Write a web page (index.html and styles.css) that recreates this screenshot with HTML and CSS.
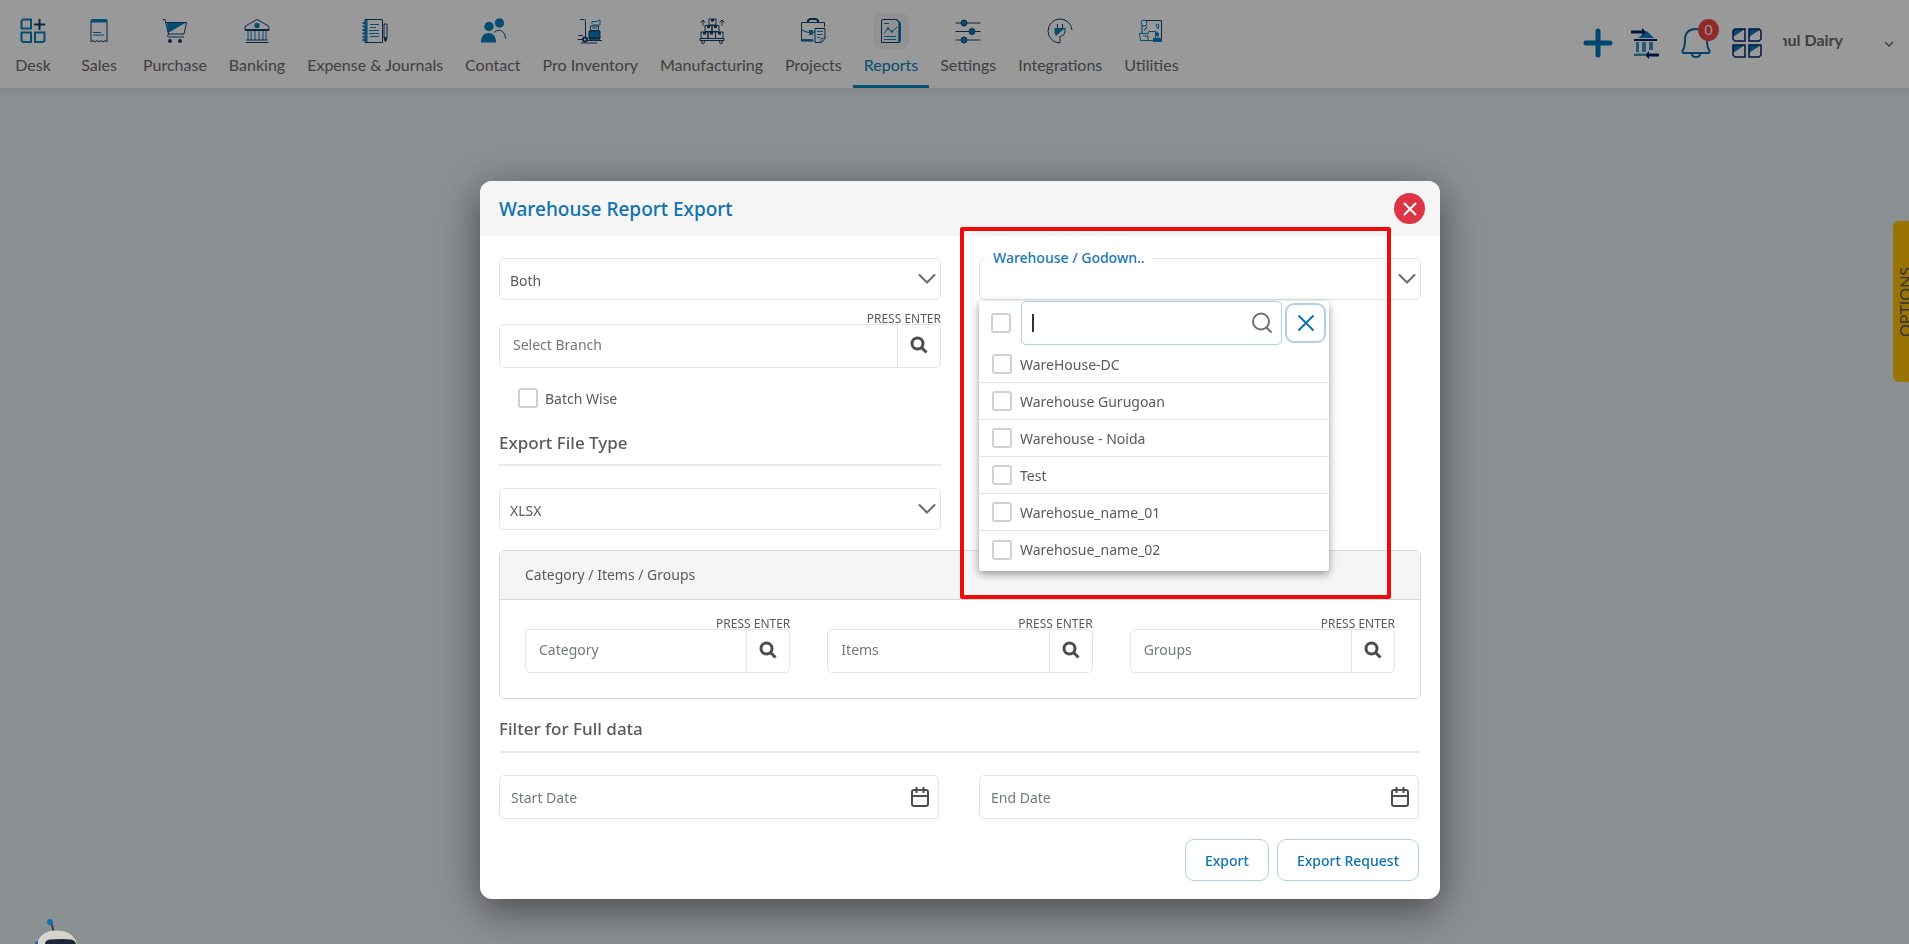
FILE: index.html
```html
<!DOCTYPE html>
<html lang="en">
<head>
    <meta charset="UTF-8">
    <meta name="viewport" content="width=device-width, initial-scale=1.0">
    <title>Warehouse Report Export</title>
    <link rel="stylesheet" href="styles.css">
</head>
<body>
    <header class="topbar">
        <nav class="menu">
            <a class="menu-item" href="#">
                <svg class="menu-icon" viewBox="0 0 26 26"><g class="line-thick"><path d="M3 1.500h8v9H1.500V3z"/><path d="M1.500 14.500h9.500v9.500H3L1.500 22.500z"/><path d="M15 14.500h9.500v8L23 24h-8z"/></g><path class="dark-thick" d="M19.500 1v11M14 6.500h11"/></svg>
                <span>Desk</span>
            </a>
            <a class="menu-item" href="#">
                <svg class="menu-icon" viewBox="0 0 26 26"><path class="dark" d="M5 4v20l2-1.500 2 1.500 2-1.500 2 1.500 2-1.500 2 1.500 2-1.500 2 1.500V4"/><path class="fill" d="M4.500 4.500V2.500Q4.500 1 6 1h14q1.500 0 1.500 1.500v2z"/><path class="line" d="M7 14.500h8M7 17h11"/></svg>
                <span>Sales</span>
            </a>
            <a class="menu-item" href="#">
                <svg class="menu-icon" viewBox="0 0 26 26"><path class="fill" d="M5 4.500h19L6 15z"/><path class="dark" d="M.5 1.500h2.500L6.500 16H22L24.500 4.500H4M6.500 16q-2 3 0 3H22"/><circle class="fill-dark" cx="8" cy="23" r="2"/><circle class="fill-dark" cx="18" cy="23" r="2"/></svg>
                <span>Purchase</span>
            </a>
            <a class="menu-item" href="#">
                <svg class="menu-icon" viewBox="0 0 26 26"><path class="dark" d="M1 10.500 1.500 8 13 1.500 24.500 8l.5 2.500v2H1z"/><circle class="fill" cx="13" cy="7.500" r="2.700"/><path class="line" d="M4 13v9M7 13v9M11 13v9M15 13v9M19 13v9M22 13v9"/><path class="dark" d="M1 11.500h24M2.500 22h21M1.500 24.500h23"/></svg>
                <span>Banking</span>
            </a>
            <a class="menu-item" href="#">
                <svg class="menu-icon" viewBox="0 0 26 26"><path class="dark" d="M3 1.500h17.500v23H3z"/><path class="line-thick" d="M4.500 2v22M.5 5h4M.5 8.500h4M.5 12h4M.5 15.500h4M.5 19h4M.5 22h4"/><path class="line" d="M8 6.500h9M8 9.500h6M7 12.500h10M7 15.500h10M8 18.500h9"/><path class="dark" d="M22 6h3v14l-1.500 4-1.500-4z"/><path class="fill-dark" d="M22 19h3l-1.500 5z"/></svg>
                <span>Expense &amp; Journals</span>
            </a>
            <a class="menu-item" href="#">
                <svg class="menu-icon" viewBox="0 0 26 26"><circle class="fill" cx="9" cy="8.500" r="4.700"/><circle class="fill" cx="19.500" cy="5" r="4.700"/><path class="fill" d="M1 24.500C1 18 4 15 8.500 15s7.500 3 7.500 9.500z"/><path class="dark" d="M14 14.500q4-4 8.500-1 3 2 3 7"/></svg>
                <span>Contact</span>
            </a>
            <a class="menu-item" href="#">
                <svg class="menu-icon" viewBox="0 0 26 26"><path class="dark" d="M3 1.500h4.500q1 0 1 1V19M.5 21.500H6M1.500 17.500H6M10 22.500h15M4 25h16"/><circle class="dark-thick" cx="8" cy="21.500" r="2"/><path class="fill" d="M12 13h11v8H12z"/><path class="dark" d="M12 13h11v8H12zM13.500 8h8v4.500h-8z"/><path class="dark-thick" d="M12 20.500h11"/><path class="line" d="M15 6.500V3.500h5l3-1.500v5h-7M15 10h5"/></svg>
                <span>Pro Inventory</span>
            </a>
            <a class="menu-item" href="#">
                <svg class="menu-icon" viewBox="0 0 26 26"><path class="dark" d="M10 1h7v6h-7zM6 7.500h7v6H6zM13 7.500h7v6h-7zM2 14h7v6.500H2zM9 14h7.500v6.500H9zM16.500 14H24v6.500h-7.500zM1 20.500h24v2H1zM4 7.500v-5M1.500 4.500 4 2l2 2.500M23 7.500v-5M20.500 4.500 23 2l2.500 2.500"/><path class="fill-dark" d="M12 1h3v2.500h-3zM8 7.500h3V10H8zM15 7.500h3V10h-3zM4 14h3v2.500H4zM11 14h3v2.500h-3zM19 14h3v2.500h-3z"/><circle class="dark" cx="4" cy="24" r="1.500"/><circle class="dark" cx="22" cy="24" r="1.500"/></svg>
                <span>Manufacturing</span>
            </a>
            <a class="menu-item" href="#">
                <svg class="menu-icon" viewBox="0 0 26 26"><path class="dark-thick" d="M8 4V2.500L10 1h6l2 1.500V4"/><path class="dark" d="M24.500 9V4.500H1.500v18.500h12M2 12q4 2.500 8 2.500M13 14.500l2-1"/><path class="line-thick" d="M2 22h11"/><path class="fill" d="M9 12h4v5H9z"/><path class="dark" d="M15 10.500h10v10L21.500 24.500H15z"/><path class="line" d="M17 13.500h6M17 16.500h6M17 19.500h3M25 20l-4 .5v4"/></svg>
                <span>Projects</span>
            </a>
            <a class="menu-item active" href="#">
                <svg class="menu-icon" viewBox="0 0 26 26"><path class="fill" d="M3.500 4.500V3q0-2 2-2H19l4 4v18l-2 2h-1V4.500z"/><path class="paper" d="M3.500 24.500V3q0-1.500 1.500-1.500h12.500q3.500.5 3.500 4v19z"/><path class="line" d="M6 15.500l4-5 4 3.500 5-5M6 5.500h5M6 18.500h12M6 21.500h12"/><circle class="fill" cx="10" cy="10.500" r="1.200"/><circle class="fill" cx="14" cy="13.500" r="1.200"/></svg>
                <span>Reports</span>
            </a>
            <a class="menu-item" href="#">
                <svg class="menu-icon" viewBox="0 0 26 26"><path class="dark" d="M.5 5h25M.5 13.500h25M.5 22h25"/><circle class="fill ring" cx="9" cy="5" r="3"/><circle class="fill ring" cx="17" cy="13.500" r="3"/><circle class="fill ring" cx="9" cy="22" r="3"/></svg>
                <span>Settings</span>
            </a>
            <a class="menu-item" href="#">
                <svg class="menu-icon" viewBox="0 0 26 26"><path class="dark" d="M25 12A12 12 0 1 0 13 25v-7"/><path class="fill" d="M7.500 10H18L9 18 7.500 15z"/><path class="dark" d="M10.500 10V6M15.500 10V6M18 10v4q0 3-4.500 4.500"/></svg>
                <span>Integrations</span>
            </a>
            <a class="menu-item" href="#">
                <svg class="menu-icon" viewBox="0 0 26 26"><circle class="line" cx="6" cy="5" r="3"/><path class="dark" d="M8 2.500h15.500v21H18M4 8v7M9 8.500l-2.500 4"/><path class="line" d="M18 7q2-2 3 0l-1 4zM1.500 15.500h9V13.500h7v9h-15zM5 18h5v4M17 13l3 2v5"/><path class="fill" d="M15 20h9v4h-9zM17 15h4l-1 3h-3z"/></svg>
                <span>Utilities</span>
            </a>
        </nav>
        <div class="tools">
            <button class="tool add" type="button" aria-label="Add"><svg viewBox="0 0 30 30"><path d="M15 3v24M3 15h24" fill="none" stroke="#0077b9" stroke-width="5" stroke-linecap="round"/></svg></button>
            <button class="tool" type="button" aria-label="Bank transfer"><svg viewBox="0 0 30 30"><path fill="#0b81c4" d="M8 10 17 3l7 7z"/><path fill="#3f93c4" d="M6 14h3v10H6zM12 14h4v10h-4zM19 14h4v8h-4zM4 25.500h11V28H4z"/><path fill="none" stroke="#04246a" stroke-width="2" d="M4 12h23"/><path fill="#04246a" d="M1 2.500h11V0l4 4-4 4V5.500H1zM29 25.500H19V23l-4 4 4 4v-2.500h10z"/></svg></button>
            <button class="tool" type="button" aria-label="Notifications"><svg viewBox="0 0 30 30"><path d="M3 25c-2 0-2-2-1-3 2-3 2-6 2-10C4 5 8 1 15 1s11 4 11 11c0 4 0 7 2 10 1 1 1 3-1 3zM11 26q0 3 4 3t4-3" fill="none" stroke="#0a6da8" stroke-width="2"/></svg><span class="badge">0</span></button>
            <button class="tool" type="button" aria-label="Apps"><svg viewBox="0 0 30 30"><path fill="#0a78b8" d="M1 1h12L1 9zM17 1h12L17 9zM1 17h12L1 25zM17 17h12l-12 8z"/><g fill="none" stroke="#04246a" stroke-width="1.500"><path d="M3 1h10v12H3l-2-2V3zM17 1h10l2 2v8l-2 2H17zM1 17h12v12H3l-2-2zM17 17h12v10l-2 2H17z"/></g></svg></button>
            <span class="company"><span>hul Dairy</span></span>
            <button class="company-toggle" type="button" aria-label="Switch company"><svg viewBox="0 0 10 10"><path d="M1 3l4 4 4-4" fill="none" stroke="#666" stroke-width="1.500"/></svg></button>
        </div>
    </header>

    <button class="options-tab" type="button">OPTIONS</button>

    <div class="backdrop">
        <form class="modal" role="dialog" aria-labelledby="modal-title">
            <div class="modal-header">
                <h1 id="modal-title">Warehouse Report Export</h1>
                <button class="close" type="button" aria-label="Close"><svg viewBox="0 0 16 16"><path d="M2 2l12 12M14 2 2 14"/></svg></button>
            </div>
            <div class="modal-body">
                <div class="columns">
                    <div class="column">
                        <div class="select-box">
                            <select aria-label="Type"><option>Both</option></select>
                            <svg class="chevron" viewBox="0 0 18 12"><path d="M1.500 2 9 9.500 16.500 2"/></svg>
                        </div>
                        <div class="lookup">
                            <label class="hint" for="branch">PRESS ENTER</label>
                            <div class="lookup-box">
                                <input id="branch" type="text" placeholder="Select Branch">
                                <button type="button" aria-label="Search branch"><svg viewBox="0 0 18 18"><circle cx="7.500" cy="7.500" r="5.500"/><path d="M11.500 11.500l5 5"/></svg></button>
                            </div>
                        </div>
                        <label class="batch"><input class="check" type="checkbox"> Batch Wise</label>
                        <h2>Export File Type</h2>
                        <div class="select-box">
                            <select aria-label="Export file type"><option>XLSX</option></select>
                            <svg class="chevron" viewBox="0 0 18 12"><path d="M1.500 2 9 9.500 16.500 2"/></svg>
                        </div>
                    </div>
                    <div class="column">
                        <div class="select-box">
                            <label class="float-label" for="warehouse">Warehouse / Godown..</label>
                            <select id="warehouse"><option></option></select>
                            <svg class="chevron" viewBox="0 0 18 12"><path d="M1.500 2 9 9.500 16.500 2"/></svg>
                            <div class="dropdown">
                                <div class="dropdown-search">
                                    <input class="check" type="checkbox" aria-label="Select all">
                                    <div class="search-box">
                                        <input type="text" aria-label="Search warehouse">
                                        <span class="caret"></span>
                                        <svg viewBox="0 0 22 22"><circle cx="10" cy="9.500" r="8"/><path d="M15.500 15.500l5 5"/></svg>
                                    </div>
                                    <button class="clear" type="button" aria-label="Clear"><svg viewBox="0 0 18 18"><path d="M1.500 1.500l15 15M16.500 1.500l-15 15"/></svg></button>
                                </div>
                                <label class="dropdown-row"><input class="check" type="checkbox"> WareHouse-DC</label>
                                <label class="dropdown-row"><input class="check" type="checkbox"> Warehouse Gurugoan</label>
                                <label class="dropdown-row"><input class="check" type="checkbox"> Warehouse - Noida</label>
                                <label class="dropdown-row"><input class="check" type="checkbox"> Test</label>
                                <label class="dropdown-row"><input class="check" type="checkbox"> Warehosue_name_01</label>
                                <label class="dropdown-row"><input class="check" type="checkbox"> Warehosue_name_02</label>
                            </div>
                        </div>
                    </div>
                </div>

                <section class="card">
                    <div class="card-header">Category / Items / Groups</div>
                    <div class="card-body">
                        <div class="lookup">
                            <label class="hint" for="category">PRESS ENTER</label>
                            <div class="lookup-box">
                                <input id="category" type="text" placeholder="Category">
                                <button type="button" aria-label="Search category"><svg viewBox="0 0 18 18"><circle cx="7.500" cy="7.500" r="5.500"/><path d="M11.500 11.500l5 5"/></svg></button>
                            </div>
                        </div>
                        <div class="lookup">
                            <label class="hint" for="items">PRESS ENTER</label>
                            <div class="lookup-box">
                                <input id="items" type="text" placeholder="Items">
                                <button type="button" aria-label="Search items"><svg viewBox="0 0 18 18"><circle cx="7.500" cy="7.500" r="5.500"/><path d="M11.500 11.500l5 5"/></svg></button>
                            </div>
                        </div>
                        <div class="lookup">
                            <label class="hint" for="groups">PRESS ENTER</label>
                            <div class="lookup-box">
                                <input id="groups" type="text" placeholder="Groups">
                                <button type="button" aria-label="Search groups"><svg viewBox="0 0 18 18"><circle cx="7.500" cy="7.500" r="5.500"/><path d="M11.500 11.500l5 5"/></svg></button>
                            </div>
                        </div>
                    </div>
                </section>

                <h2>Filter for Full data</h2>
                <div class="dates">
                    <div class="date-box">
                        <input type="text" placeholder="Start Date" aria-label="Start Date">
                        <svg viewBox="0 0 18 20"><rect x="1" y="3" width="16" height="16" rx="2"/><path d="M1 9h16M5.500 0v6M12.500 0v6"/></svg>
                    </div>
                    <div class="date-box">
                        <input type="text" placeholder="End Date" aria-label="End Date">
                        <svg viewBox="0 0 18 20"><rect x="1" y="3" width="16" height="16" rx="2"/><path d="M1 9h16M5.500 0v6M12.500 0v6"/></svg>
                    </div>
                </div>
                <div class="actions">
                    <button class="btn" type="button">Export</button>
                    <button class="btn" type="button">Export Request</button>
                </div>
            </div>
            <div class="highlight"></div>
        </form>
    </div>

    <svg class="robot" viewBox="0 0 48 26" aria-hidden="true"><path d="M18.500 13 16 4" stroke="#3a3f48" stroke-width="2"/><circle cx="15" cy="4" r="3" fill="#1470b0"/><path d="M2 26Q5 13 20 12.500 38 12 42 26z" fill="#d6d2cc"/><path d="M10 26q0-4 5-4.500 12-1 21 0 4 .5 5 4.500z" fill="#1b2738"/><path d="M0 26q0-3 3-3v3z" fill="#1470b0"/></svg>
</body>
</html>
```

FILE: styles.css
```css
* {
    box-sizing: border-box;
    margin: 0;
    padding: 0;
}

body {
    min-height: 100vh;
    overflow: hidden;
    background-color: #e6eef3;
    color: #5a5a5a;
    font-family: "Noto Sans", "Open Sans", sans-serif;
    font-size: 14px;
}

button, input, select {
    font: inherit;
    color: inherit;
    background: none;
    border: none;
    outline: none;
}

button {
    cursor: pointer;
}

svg {
    display: block;
}

/* Top bar */
.topbar {
    display: flex;
    justify-content: space-between;
    height: 88px;
    background-color: #fff;
    box-shadow: 0 2px 8px rgba(0, 0, 0, 0.08);
    font-family: Lato, sans-serif;
}

.menu {
    display: flex;
}

.menu-item {
    display: flex;
    flex-direction: column;
    align-items: center;
    gap: 3px;
    min-width: 66px;
    padding: 13px 11px 0;
    border-bottom: 3px solid transparent;
    color: #6b6b6b;
    font-size: 16px;
    line-height: 25px;
    text-decoration: none;
    white-space: nowrap;
}

.menu-item.active {
    color: #0b7fc0;
    border-bottom-color: #0b86c8;
}

.menu-icon {
    width: 36px;
    height: 36px;
    padding: 5px;
    border-radius: 8px;
}

.active .menu-icon {
    background-color: #f3f3f3;
}

.line, .line-thick, .dark, .dark-thick {
    fill: none;
    stroke: #0b7fc0;
    stroke-width: 1;
}

.line-thick {
    stroke-width: 2;
}

.dark, .dark-thick {
    stroke: #14406f;
}

.dark-thick {
    stroke-width: 2;
}

.fill {
    fill: #0b7fc0;
}

.fill-dark {
    fill: #14406f;
}

.paper {
    fill: #f3f3f3;
    stroke: #14406f;
}

.ring {
    stroke: #14406f;
}

.tools {
    display: flex;
    align-items: flex-start;
    gap: 21px;
    padding: 28px 15px 0 0;
}

.tool {
    position: relative;
    width: 30px;
    height: 30px;
}

.tool svg {
    width: 30px;
    height: 30px;
    overflow: visible;
}

.add {
    margin-right: -4px;
}

.badge {
    position: absolute;
    top: -9px;
    right: -8px;
    width: 21px;
    height: 22px;
    border-radius: 50%;
    background-color: #f04646;
    color: #fff;
    font-size: 14px;
    line-height: 22px;
}

.company {
    display: flex;
    justify-content: flex-end;
    width: 60px;
    overflow: hidden;
    color: #6b6b6b;
    font-size: 16px;
    font-weight: bold;
    line-height: 24px;
    white-space: nowrap;
}

.company-toggle {
    width: 10px;
    height: 32px;
    margin-left: 20px;
}

.options-tab {
    position: fixed;
    top: 221px;
    right: -15px;
    width: 31px;
    height: 161px;
    padding-left: 8px;
    border-radius: 0 6px 6px 0;
    background-color: #ffc107;
    color: #555;
    font-family: Lato, sans-serif;
    font-size: 16px;
    writing-mode: vertical-rl;
    transform: rotate(180deg);
}

.robot {
    position: fixed;
    bottom: 0;
    left: 35px;
    width: 48px;
    height: 26px;
}

/* Modal */
.backdrop {
    position: fixed;
    inset: 0;
    display: flex;
    justify-content: center;
    align-items: flex-start;
    padding: 181px 0 0 11px;
    background-color: rgba(0, 0, 0, 0.4);
}

.modal {
    position: relative;
    width: 960px;
    border-radius: 12px;
    background-color: #fff;
    box-shadow: 0 10px 40px rgba(0, 0, 0, 0.5);
}

.modal-header {
    display: flex;
    justify-content: space-between;
    align-items: center;
    height: 55px;
    padding: 0 15px 0 19px;
    border-radius: 12px 12px 0 0;
    background-color: #f5f5f5;
}

h1 {
    color: #0e72b0;
    font-size: 19px;
    font-weight: 500;
}

.close {
    display: grid;
    place-items: center;
    width: 31px;
    height: 31px;
    border-radius: 50%;
    background-color: #dc3545;
}

.close svg {
    width: 16px;
    height: 16px;
    fill: none;
    stroke: #fff;
    stroke-width: 2;
}

.modal-body {
    padding: 22px 19px 18px;
}

.columns {
    display: grid;
    grid-template-columns: 1fr 1fr;
    gap: 38px;
}

h2 {
    height: 42px;
    margin-bottom: 22px;
    border-bottom: 2px solid #e8e8e8;
    font-size: 17px;
    font-weight: 500;
    line-height: 36px;
}

.select-box {
    position: relative;
    height: 42px;
    border: 1px solid #e6e6e6;
    border-radius: 5px;
}

.select-box select {
    width: 100%;
    height: 100%;
    padding: 2px 40px 0 10px;
    appearance: none;
}

.chevron {
    position: absolute;
    top: 14px;
    right: 4px;
    width: 18px;
    height: 12px;
    fill: none;
    stroke: #666b70;
    stroke-width: 2;
    stroke-linecap: round;
}

.lookup {
    padding-top: 9px;
}

.hint {
    display: block;
    height: 15px;
    font-size: 12px;
    line-height: 20px;
    text-align: right;
}

.lookup-box {
    display: flex;
    height: 44px;
    border: 1px solid #e6e6e6;
    border-radius: 5px;
}

.lookup-box input {
    flex: 1;
    min-width: 0;
    padding: 0 13px 4px;
}

input::placeholder {
    color: #73787d;
    opacity: 1;
}

.lookup-box button {
    display: grid;
    place-items: center;
    width: 43px;
    padding-bottom: 2px;
    border-left: 1px solid #e6e6e6;
}

.lookup-box svg {
    width: 18px;
    height: 18px;
    fill: none;
    stroke: #4c4c4c;
    stroke-width: 3;
}

.check {
    flex: none;
    width: 20px;
    height: 20px;
    border: 2px solid #ced2d6;
    border-radius: 3px;
    background-color: #fff;
    appearance: none;
}

.batch {
    display: flex;
    align-items: center;
    gap: 7px;
    height: 60px;
    padding-left: 19px;
}

.batch + h2 {
    height: 38px;
    line-height: 30px;
}

/* Warehouse dropdown */
.float-label {
    position: absolute;
    top: -11px;
    left: 5px;
    padding: 0 8px;
    background-color: #fff;
    color: #1878b8;
    font-size: 14px;
    font-weight: 500;
    line-height: 20px;
}

.dropdown {
    position: absolute;
    top: 42px;
    left: -1px;
    z-index: 1;
    width: 350px;
    padding-bottom: 3px;
    border-radius: 3px;
    background-color: #fff;
    box-shadow: 0 3px 8px rgba(0, 0, 0, 0.4);
}

.dropdown-search {
    display: flex;
    align-items: center;
    height: 44px;
    margin-bottom: 1px;
    padding: 0 3px 0 12px;
}

.search-box {
    position: relative;
    flex: 1;
    height: 44px;
    margin: 0 3px 0 10px;
    border: 1px solid #acd0e6;
    border-radius: 5px;
}

.search-box input {
    width: 100%;
    height: 100%;
    padding: 0 40px 0 11px;
}

.caret {
    position: absolute;
    top: 12px;
    left: 10px;
    width: 2px;
    height: 18px;
    background-color: #333;
}

.search-box svg {
    position: absolute;
    top: 10px;
    right: 8px;
    width: 22px;
    height: 22px;
    fill: none;
    stroke: #6c7075;
    stroke-width: 2;
}

.clear {
    display: grid;
    place-items: center;
    width: 41px;
    height: 40px;
    border: 2px solid #b0d0e4;
    border-radius: 9px;
}

.clear svg {
    width: 18px;
    height: 18px;
    fill: none;
    stroke: #0e72b8;
    stroke-width: 2;
}

.dropdown-row {
    display: flex;
    align-items: center;
    gap: 8px;
    height: 37px;
    padding-left: 13px;
    border-bottom: 1px solid #e6e6e6;
}

.dropdown-row:last-child {
    border-bottom: none;
}

/* Category card */
.card {
    margin: 20px 0 12px;
    border: 1px solid #d9d9d9;
    border-radius: 5px;
}

.card-header {
    padding: 0 25px;
    border-bottom: 1px solid #d9d9d9;
    background-color: #f5f5f5;
    line-height: 48px;
}

.card-body {
    display: grid;
    grid-template-columns: repeat(3, minmax(0, 1fr));
    gap: 37px;
    padding: 5px 25px 25px;
}

/* Dates and buttons */
.dates {
    display: grid;
    grid-template-columns: 1fr 1fr;
    gap: 40px;
    margin-right: 2px;
}

.date-box {
    position: relative;
    height: 44px;
    border: 1px solid #e6e6e6;
    border-radius: 5px;
}

.date-box input {
    width: 100%;
    height: 100%;
    padding: 0 40px 0 11px;
}

.date-box svg {
    position: absolute;
    top: 11px;
    right: 9px;
    width: 18px;
    height: 20px;
    fill: none;
    stroke: #4c4c4c;
    stroke-width: 2;
}

.actions {
    display: flex;
    justify-content: flex-end;
    gap: 8px;
    margin: 20px 2px 0 0;
}

.btn {
    height: 42px;
    padding: 0 19px;
    border: 1px solid #b0d0e4;
    border-radius: 9px;
    color: #0e72b0;
    font-weight: 500;
}

.highlight {
    position: absolute;
    top: 46px;
    left: 480px;
    z-index: 2;
    width: 431px;
    height: 372px;
    border: 4px solid #f00a0a;
    border-radius: 2px;
    pointer-events: none;
}
```
